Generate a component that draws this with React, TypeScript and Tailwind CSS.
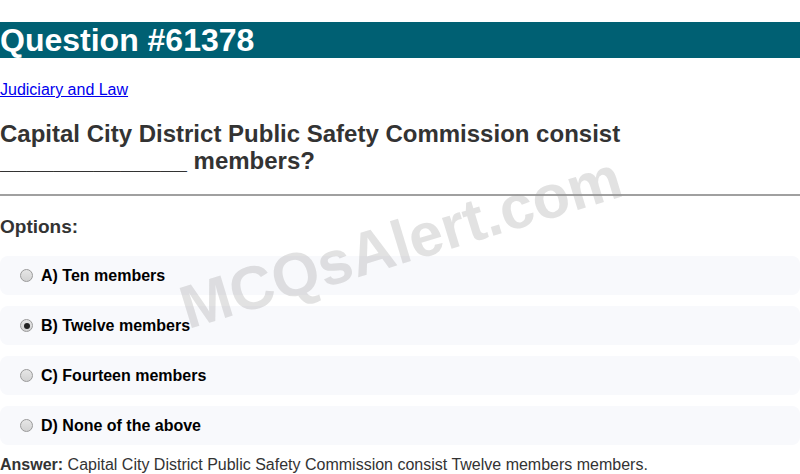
const options = [
  { label: 'A) Ten members', checked: false },
  { label: 'B) Twelve members', checked: true },
  { label: 'C) Fourteen members', checked: false },
  { label: 'D) None of the above', checked: false },
];

function Radio({ checked }: { checked: boolean }) {
  return (
    <span className="flex h-[13px] w-[13px] shrink-0 items-center justify-center rounded-full border border-[#9a9a9a] bg-gradient-to-b from-[#e6e6e6] to-[#d2d2d2]">
      {checked && <span className="h-[6px] w-[6px] rounded-full bg-[#222]" />}
    </span>
  );
}

export default function App() {
  return (
    <div className="relative h-[474px] w-[800px] overflow-hidden bg-white font-['Liberation_Sans',Arial,sans-serif]">
      <h1 className="mt-[22px] h-[36px] bg-[#006073] text-[32px] font-bold leading-[36px] text-white">Question #61378</h1>

      <a href="#" className="mt-[23px] block text-[16px] leading-[18px] text-[#0000ee] underline">
        Judiciary and Law
      </a>

      <h2 className="mt-[21px] text-[24px] font-bold leading-[27px] text-[#333]">
        Capital City District Public Safety Commission consist
        <br />
        ______________ members?
      </h2>

      <hr className="mt-[20px] border-t-2 border-[#a0a0a0]" />

      <h3 className="mt-[20px] text-[19px] font-bold leading-[22px] text-[#333]">Options:</h3>

      <div className="mt-[18px] flex flex-col gap-[11px]">
        {options.map((o) => (
          <div key={o.label} className="flex h-[39px] items-center gap-[8px] rounded-[8px] bg-[#f8f9fc] pl-[20px]">
            <Radio checked={o.checked} />
            <span className="text-[16px] font-bold text-black">{o.label}</span>
          </div>
        ))}
      </div>

      <p className="mt-[11px] text-[16px] leading-[18px] text-[#333]">
        <span className="font-bold">Answer:</span> Capital City District Public Safety Commission consist Twelve members members.
      </p>

      <div className="pointer-events-none absolute left-[401px] top-[243px] -translate-x-1/2 -translate-y-1/2 -rotate-[17deg] whitespace-nowrap text-[61px] font-bold text-[rgba(150,150,150,0.28)]">
        MCQsAlert.com
      </div>
    </div>
  );
}
